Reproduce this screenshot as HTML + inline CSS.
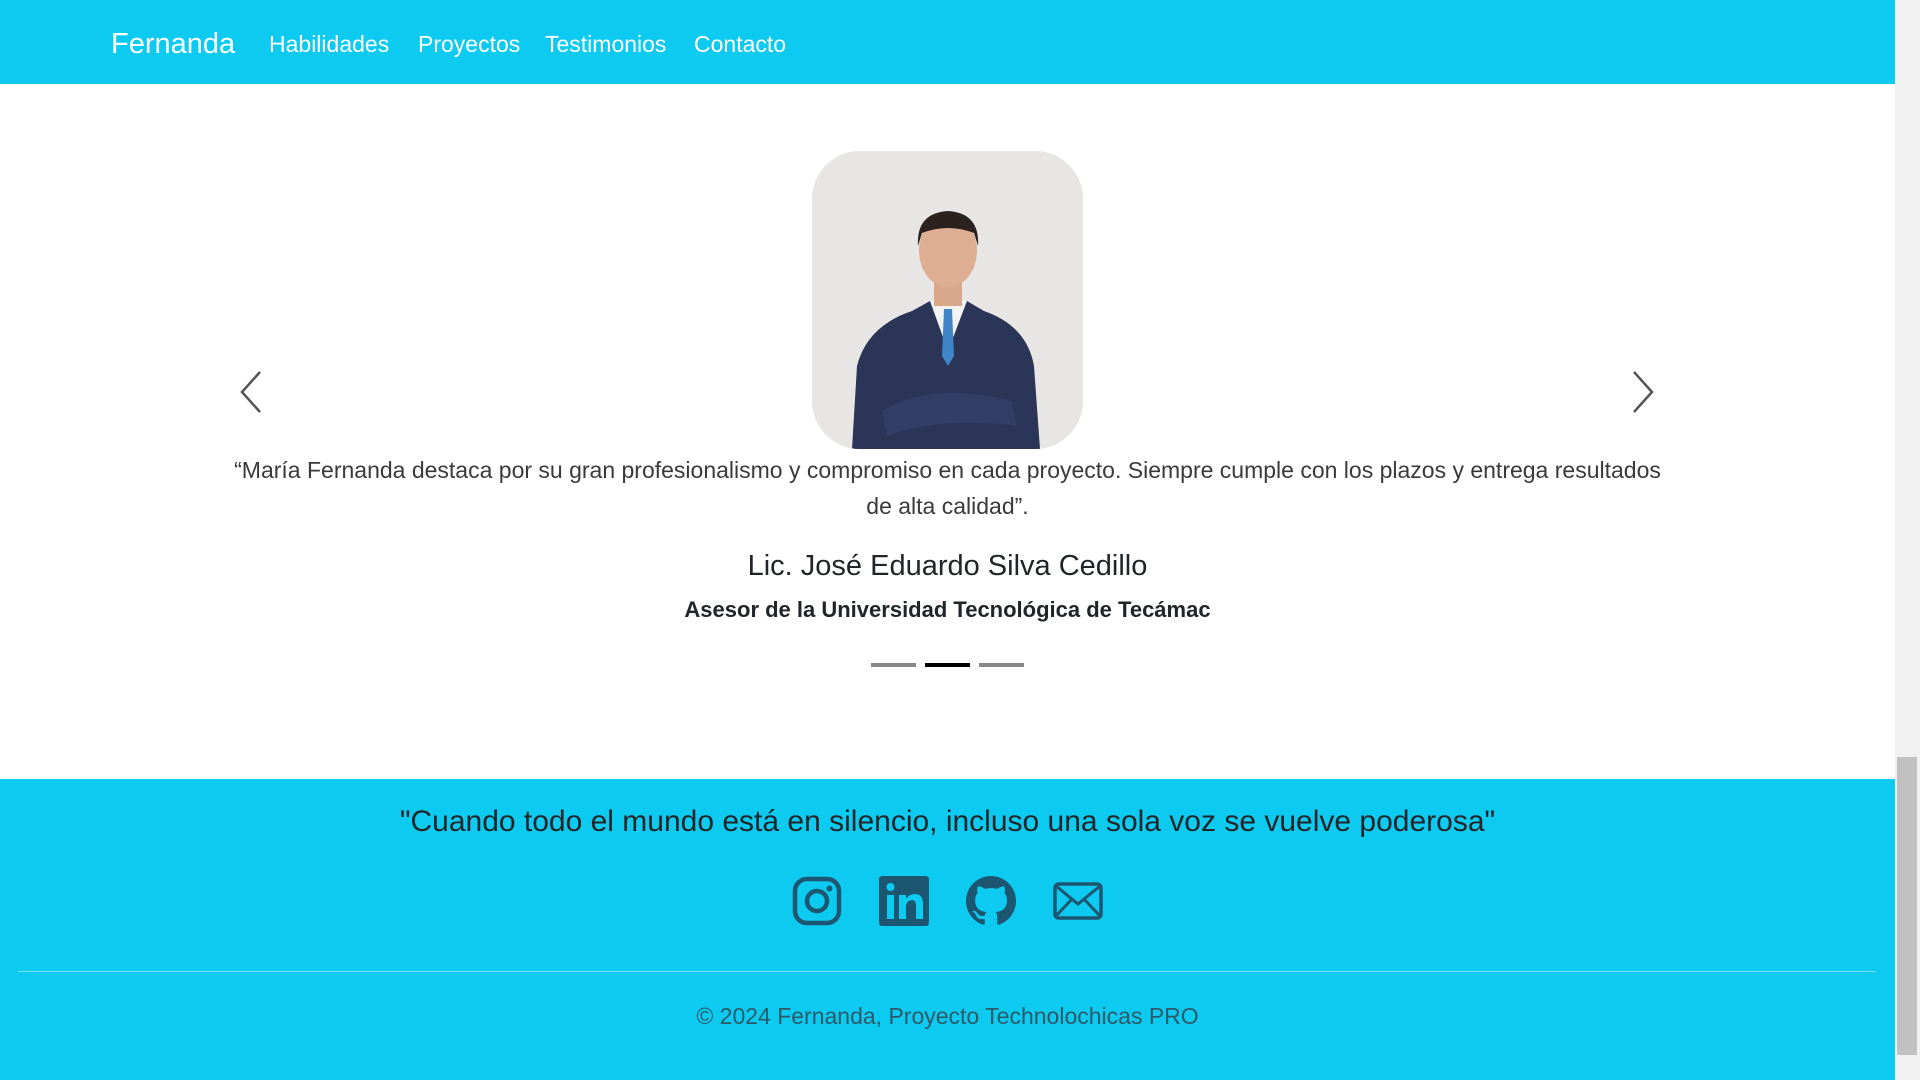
<!DOCTYPE html>
<html><head><meta charset="utf-8"><style>
*{margin:0;padding:0;box-sizing:border-box}
html,body{width:1920px;height:1080px;overflow:hidden;background:#fff;font-family:"Liberation Sans",sans-serif;color:#212529}
.nav{position:absolute;left:0;top:0;width:1895px;height:84px;background:#0dcaf0;color:#fff}
.nav span{position:absolute;top:31px;font-size:23px}
.brand{font-size:29px!important;top:28px!important;left:111px}
.sb{position:absolute;left:1895px;top:0;width:25px;height:1080px;background:#f1f1f1}
.thumb{position:absolute;left:1897px;top:757px;width:20px;height:298px;background:#c1c1c1}
.photo{position:absolute;left:812px;top:151px;width:271px;height:298px;border-radius:48px;overflow:hidden;background:#e6e4e2}
.arrow{position:absolute;top:370px}
.c{position:absolute;left:0;width:1895px;text-align:center}
.foot{position:absolute;left:0;top:779px;width:1895px;height:301px;background:#0dcaf0}
.ind{position:absolute;top:663px;height:4px;width:45px;background:#888}
</style></head><body>
<div class="nav"><span class="brand">Fernanda</span><span style="left:269px">Habilidades</span><span style="left:418px">Proyectos</span><span style="left:545px">Testimonios</span><span style="left:694px">Contacto</span></div>
<div class="photo"><svg width="271" height="298" viewBox="0 0 271 298">
<rect width="271" height="298" fill="#e8e6e4"/>
<path d="M40 298 L45 215 Q55 175 100 160 L118 150 L155 150 L172 160 Q215 175 222 215 L228 298Z" fill="#2a3558"/>
<path d="M118 150 L136 200 L155 150Z" fill="#f2f2f2"/>
<path d="M132 158 L140 158 L142 205 L136 215 L130 205Z" fill="#3f86c9"/>
<rect x="122" y="125" width="28" height="30" fill="#d9a88a"/>
<ellipse cx="136" cy="100" rx="29" ry="36" fill="#deae92"/>
<path d="M106 95 Q104 62 136 60 Q168 62 166 95 L162 82 Q136 72 110 82Z" fill="#2b2220"/>
<path d="M70 260 Q120 230 200 250 L205 275 Q130 265 75 285Z" fill="#323e66"/>
</svg></div>
<svg class="arrow" style="left:236px" width="30" height="44" viewBox="0 0 30 44"><path d="M24 2 L6 22 L24 42" fill="none" stroke="#555" stroke-width="2.5"/></svg>
<svg class="arrow" style="left:1628px" width="30" height="44" viewBox="0 0 30 44"><path d="M6 2 L24 22 L6 42" fill="none" stroke="#555" stroke-width="2.5"/></svg>
<div class="c" style="top:452px;font-size:23px;line-height:36px;color:#3a3a3a;padding:0 232px">“María Fernanda destaca por su gran profesionalismo y compromiso en cada proyecto. Siempre cumple con los plazos y entrega resultados de alta calidad”.</div>
<div class="c" style="top:550px;font-size:29px;font-weight:500">Lic. José Eduardo Silva Cedillo</div>
<div class="c" style="top:597px;font-size:22px;font-weight:600">Asesor de la Universidad Tecnológica de Tecámac</div>
<div class="ind" style="left:871px"></div><div class="ind" style="left:925px;background:#000"></div><div class="ind" style="left:979px"></div>
<div class="foot">
<div class="c" style="top:26px;font-size:30px;font-weight:500">"Cuando todo el mundo está en silencio, incluso una sola voz se vuelve poderosa"</div>
<svg style="position:absolute;left:792px;top:97px" width="50" height="50" viewBox="0 0 50 50"><rect x="3" y="3" width="44" height="44" rx="12" fill="none" stroke="#1d5670" stroke-width="4.5"/><circle cx="25" cy="25" r="10" fill="none" stroke="#1d5670" stroke-width="4.5"/><circle cx="37.5" cy="12.5" r="3" fill="#1d5670"/></svg>
<svg style="position:absolute;left:879px;top:97px" width="50" height="50" viewBox="0 0 50 50"><rect width="50" height="50" rx="3" fill="#1d5670"/><rect x="8" y="19" width="7" height="24" fill="#0dcaf0"/><circle cx="11.5" cy="11" r="4" fill="#0dcaf0"/><path d="M20 19h7v4q3-5 9-5q8 0 8 10v15h-7V30q0-6-4-6t-6 5v14h-7z" fill="#0dcaf0"/></svg>
<svg style="position:absolute;left:966px;top:97px" width="50" height="50" viewBox="0 0 16 16"><path fill="#1d5670" d="M8 0C3.58 0 0 3.58 0 8c0 3.54 2.290 6.53 5.47 7.59.4.07.55-.17.55-.38 0-.19-.01-.82-.01-1.49-2.010.37-2.530-.49-2.690-.94-.09-.23-.48-.94-.82-1.130-.28-.15-.68-.52-.01-.53.63-.01 1.080.58 1.230.82.72 1.210 1.870.87 2.330.66.07-.52.28-.87.51-1.070-1.780-.2-3.640-.89-3.640-3.950 0-.87.31-1.590.82-2.150-.08-.2-.36-1.020.08-2.120 0 0 .67-.21 2.200.82.64-.18 1.320-.27 2-.27.68 0 1.360.09 2 .27 1.530-1.040 2.200-.82 2.200-.82.44 1.100.16 1.920.08 2.120.51.56.82 1.270.82 2.150 0 3.070-1.870 3.750-3.650 3.950.29.25.54.73.54 1.480 0 1.070-.01 1.930-.01 2.200 0 .21.15.46.55.38A8.012 8.012 0 0 0 16 8c0-4.420-3.580-8-8-8z"/></svg>
<svg style="position:absolute;left:1053px;top:101px" width="50" height="42" viewBox="0 0 50 42"><rect x="2" y="4" width="46" height="34" rx="4" fill="none" stroke="#1d5670" stroke-width="3.5"/><path d="M3 6 L25 24 L47 6 M3 36 L19 19 M47 36 L31 19" fill="none" stroke="#1d5670" stroke-width="3"/></svg>
<div style="position:absolute;left:18px;top:192px;width:1858px;height:1px;background:#7fe0f4"></div>
<div class="c" style="top:224px;font-size:23px;color:#2d5a6a">© 2024 Fernanda, Proyecto Technolochicas PRO</div>
</div>
<div class="sb"></div><div class="thumb"></div>
</body></html>
